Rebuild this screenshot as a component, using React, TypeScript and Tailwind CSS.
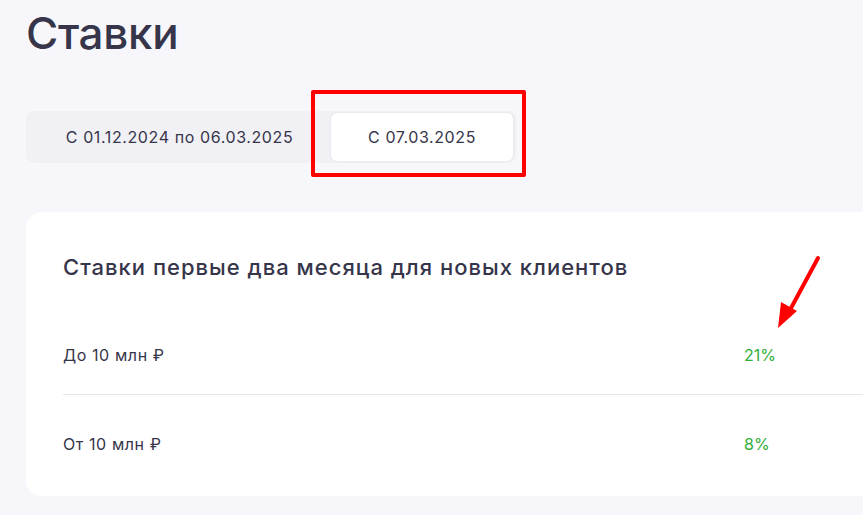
import React from 'react';

const rates = [
    { label: 'До 10 млн ₽', value: '21%' },
    { label: 'От 10 млн ₽', value: '8%' },
];

export default function App() {
    return (
        <div
            className="relative w-[863px] h-[515px] overflow-hidden bg-[#f7f7fb] text-[#36354a]"
            style={{ fontFamily: 'Inter, "Noto Sans", sans-serif' }}
        >
            <div className="pl-[26px] pt-[6px]">
                <h1 className="text-[44px] leading-[54px] font-medium tracking-[-0.3px]">Ставки</h1>

                <div className="mt-[51px] flex w-[490px] h-[52px] p-[2px] rounded-[8px] bg-[#f0f0f5]">
                    <button className="w-[303px] text-[16px] tracking-[0.6px] text-[#36354a]">С 01.12.2024 по 06.03.2025</button>
                    <button className="w-[182px] rounded-[6px] bg-white text-[16px] tracking-[0.6px] text-[#36354a] shadow-[0_0_2px_rgba(40,40,80,0.12)]">
                        С 07.03.2025
                    </button>
                </div>

                <div className="mt-[49px] w-[900px] h-[284px] rounded-[16px] bg-white pl-[37px] pt-[40px]">
                    <h2 className="text-[22px] leading-[30px] font-medium tracking-[1px]">Ставки первые два месяца для новых клиентов</h2>
                    <div className="mt-[33px]">
                        {rates.map((r, i) => (
                            <div
                                key={r.label}
                                className={`flex items-center h-[80px] ${i === 0 ? 'border-b border-[#e6e6ea]' : 'h-[97px]'}`}
                            >
                                <div className="w-[681px] text-[16px] tracking-[0.6px]">{r.label}</div>
                                <div className="text-[16px] text-[#2fae3a]">{r.value}</div>
                            </div>
                        ))}
                    </div>
                </div>
            </div>

            {/* annotation: highlight box */}
            <div className="absolute left-[311px] top-[90px] w-[215px] h-[87px] border-[4px] border-[#ff0000] rounded-[2px]" />

            {/* annotation: arrow */}
            <svg className="absolute left-[770px] top-[250px]" width="60" height="90" viewBox="0 0 60 90">
                <line x1="48" y1="8" x2="20" y2="60" stroke="#ff0000" strokeWidth="4" strokeLinecap="round" />
                <polygon points="8,78 11,52 27,61" fill="#ff0000" />
            </svg>
        </div>
    );
}
